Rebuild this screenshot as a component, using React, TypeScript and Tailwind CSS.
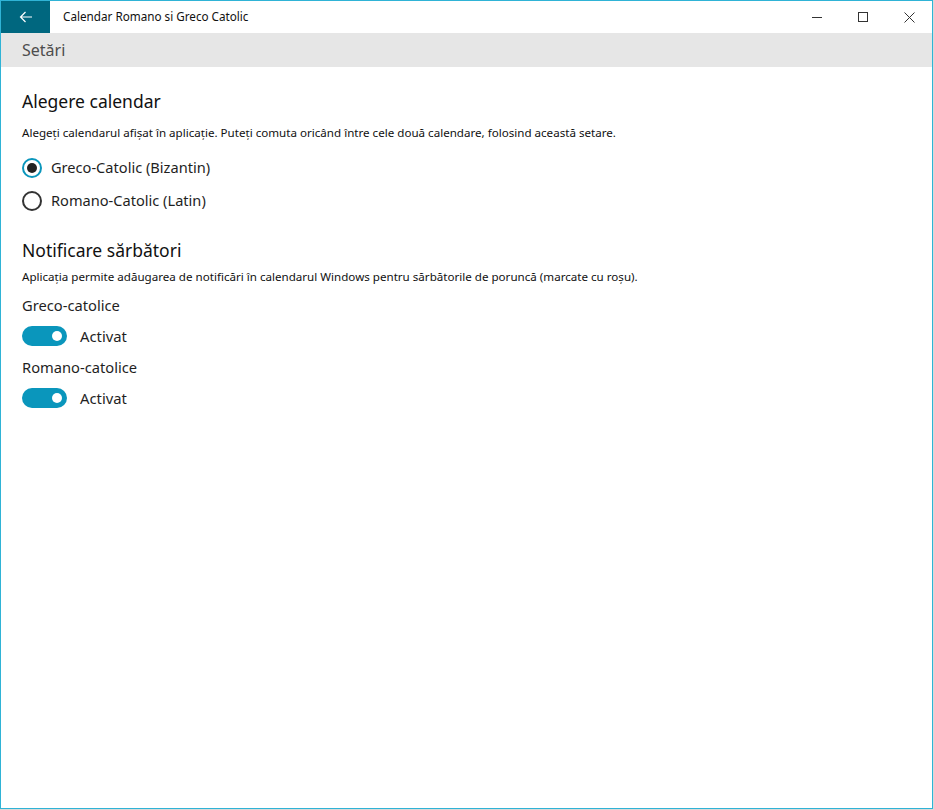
import React, { useState } from "react";

const font = { fontFamily: '"Segoe UI", "Noto Sans", "Open Sans", sans-serif' };

const Radio: React.FC<{ checked: boolean; label: string; onClick: () => void }> = ({
  checked,
  label,
  onClick,
}) => (
  <button type="button" onClick={onClick} className="flex items-center h-[33px] text-left">
    <span
      className={`w-[20px] h-[20px] rounded-full border-2 flex items-center justify-center ${
        checked ? "border-[#0a96bc]" : "border-[#333333]"
      }`}
    >
      {checked && <span className="w-[10px] h-[10px] rounded-full bg-[#222222]" />}
    </span>
    <span className="ml-[9px] text-[14.6px] text-[#1f1f1f]">{label}</span>
  </button>
);

const Toggle: React.FC<{ on: boolean; onClick: () => void }> = ({ on, onClick }) => (
  <button type="button" onClick={onClick} className="flex items-center h-[24px]">
    <span
      className={`w-[45px] h-[20px] rounded-full flex items-center px-[5px] ${
        on ? "bg-[#0a96bc] justify-end" : "border-2 border-[#333333] justify-start"
      }`}
    >
      <span className={`w-[10px] h-[10px] rounded-full ${on ? "bg-white" : "bg-[#333333]"}`} />
    </span>
    <span className="ml-[13px] text-[14.8px] text-[#1f1f1f]">{on ? "Activat" : "Dezactivat"}</span>
  </button>
);

export default function App() {
  const [calendar, setCalendar] = useState("greco");
  const [greco, setGreco] = useState(true);
  const [romano, setRomano] = useState(true);

  return (
    <div className="w-[934px] h-[810px] bg-[#d9d9d9]" style={font}>
      <div className="w-[933px] h-[809px] border border-[#2fb3d6] bg-white flex flex-col">
        {/* title bar */}
        <div className="h-[32px] flex items-stretch">
          <div className="w-[49px] bg-[#00677f] flex items-center justify-center">
            <svg width="14" height="12" viewBox="0 0 14 12" fill="none" stroke="white" strokeWidth="1.2">
              <path d="M13 6H1.5M6.5 1L1.5 6l5 5" />
            </svg>
          </div>
          <div className="flex-1 flex items-center pl-[13px] text-[11.7px] text-[#111111]">
            Calendar Romano si Greco Catolic
          </div>
          <div className="flex items-stretch">
            <div className="w-[46px] flex items-center justify-center">
              <svg width="10" height="10" viewBox="0 0 10 10" stroke="#333" strokeWidth="1">
                <path d="M0 5.5h10" />
              </svg>
            </div>
            <div className="w-[46px] flex items-center justify-center">
              <svg width="10" height="10" viewBox="0 0 10 10" fill="none" stroke="#333" strokeWidth="1">
                <rect x="0.5" y="0.5" width="9" height="9" />
              </svg>
            </div>
            <div className="w-[46px] flex items-center justify-center">
              <svg width="11" height="11" viewBox="0 0 11 11" stroke="#333" strokeWidth="1">
                <path d="M0.5 0.5l10 10M10.5 0.5l-10 10" />
              </svg>
            </div>
          </div>
        </div>

        {/* header band */}
        <div className="h-[34px] bg-[#e6e6e6] flex items-center pl-[21px] text-[16px] text-[#4d4d4d]">
          Setări
        </div>

        {/* content */}
        <div className="flex-1 pl-[21px] pt-[21px]">
          <h2 className="text-[17.5px] text-[#111111] leading-[26px]">Alegere calendar</h2>
          <p className="mt-[11px] text-[11.6px] text-[#111111] leading-[16px]">
            Alegeți calendarul afișat în aplicație. Puteți comuta oricând între cele două calendare, folosind această setare.
          </p>
          <div className="mt-[10px] flex flex-col items-start">
            <Radio checked={calendar === "greco"} label="Greco-Catolic (Bizantin)" onClick={() => setCalendar("greco")} />
            <Radio checked={calendar === "romano"} label="Romano-Catolic (Latin)" onClick={() => setCalendar("romano")} />
          </div>

          <h2 className="mt-[20px] text-[17.5px] text-[#111111] leading-[26px]">Notificare sărbători</h2>
          <p className="mt-[6px] text-[11.6px] text-[#111111] leading-[16px]">
            Aplicația permite adăugarea de notificări în calendarul Windows pentru sărbătorile de poruncă (marcate cu roșu).
          </p>

          <div className="mt-[10px] text-[14.7px] text-[#1f1f1f] leading-[20px]">Greco-catolice</div>
          <div className="mt-[9px]">
            <Toggle on={greco} onClick={() => setGreco(!greco)} />
          </div>
          <div className="mt-[9px] text-[14.7px] text-[#1f1f1f] leading-[20px]">Romano-catolice</div>
          <div className="mt-[9px]">
            <Toggle on={romano} onClick={() => setRomano(!romano)} />
          </div>
        </div>
      </div>
    </div>
  );
}
